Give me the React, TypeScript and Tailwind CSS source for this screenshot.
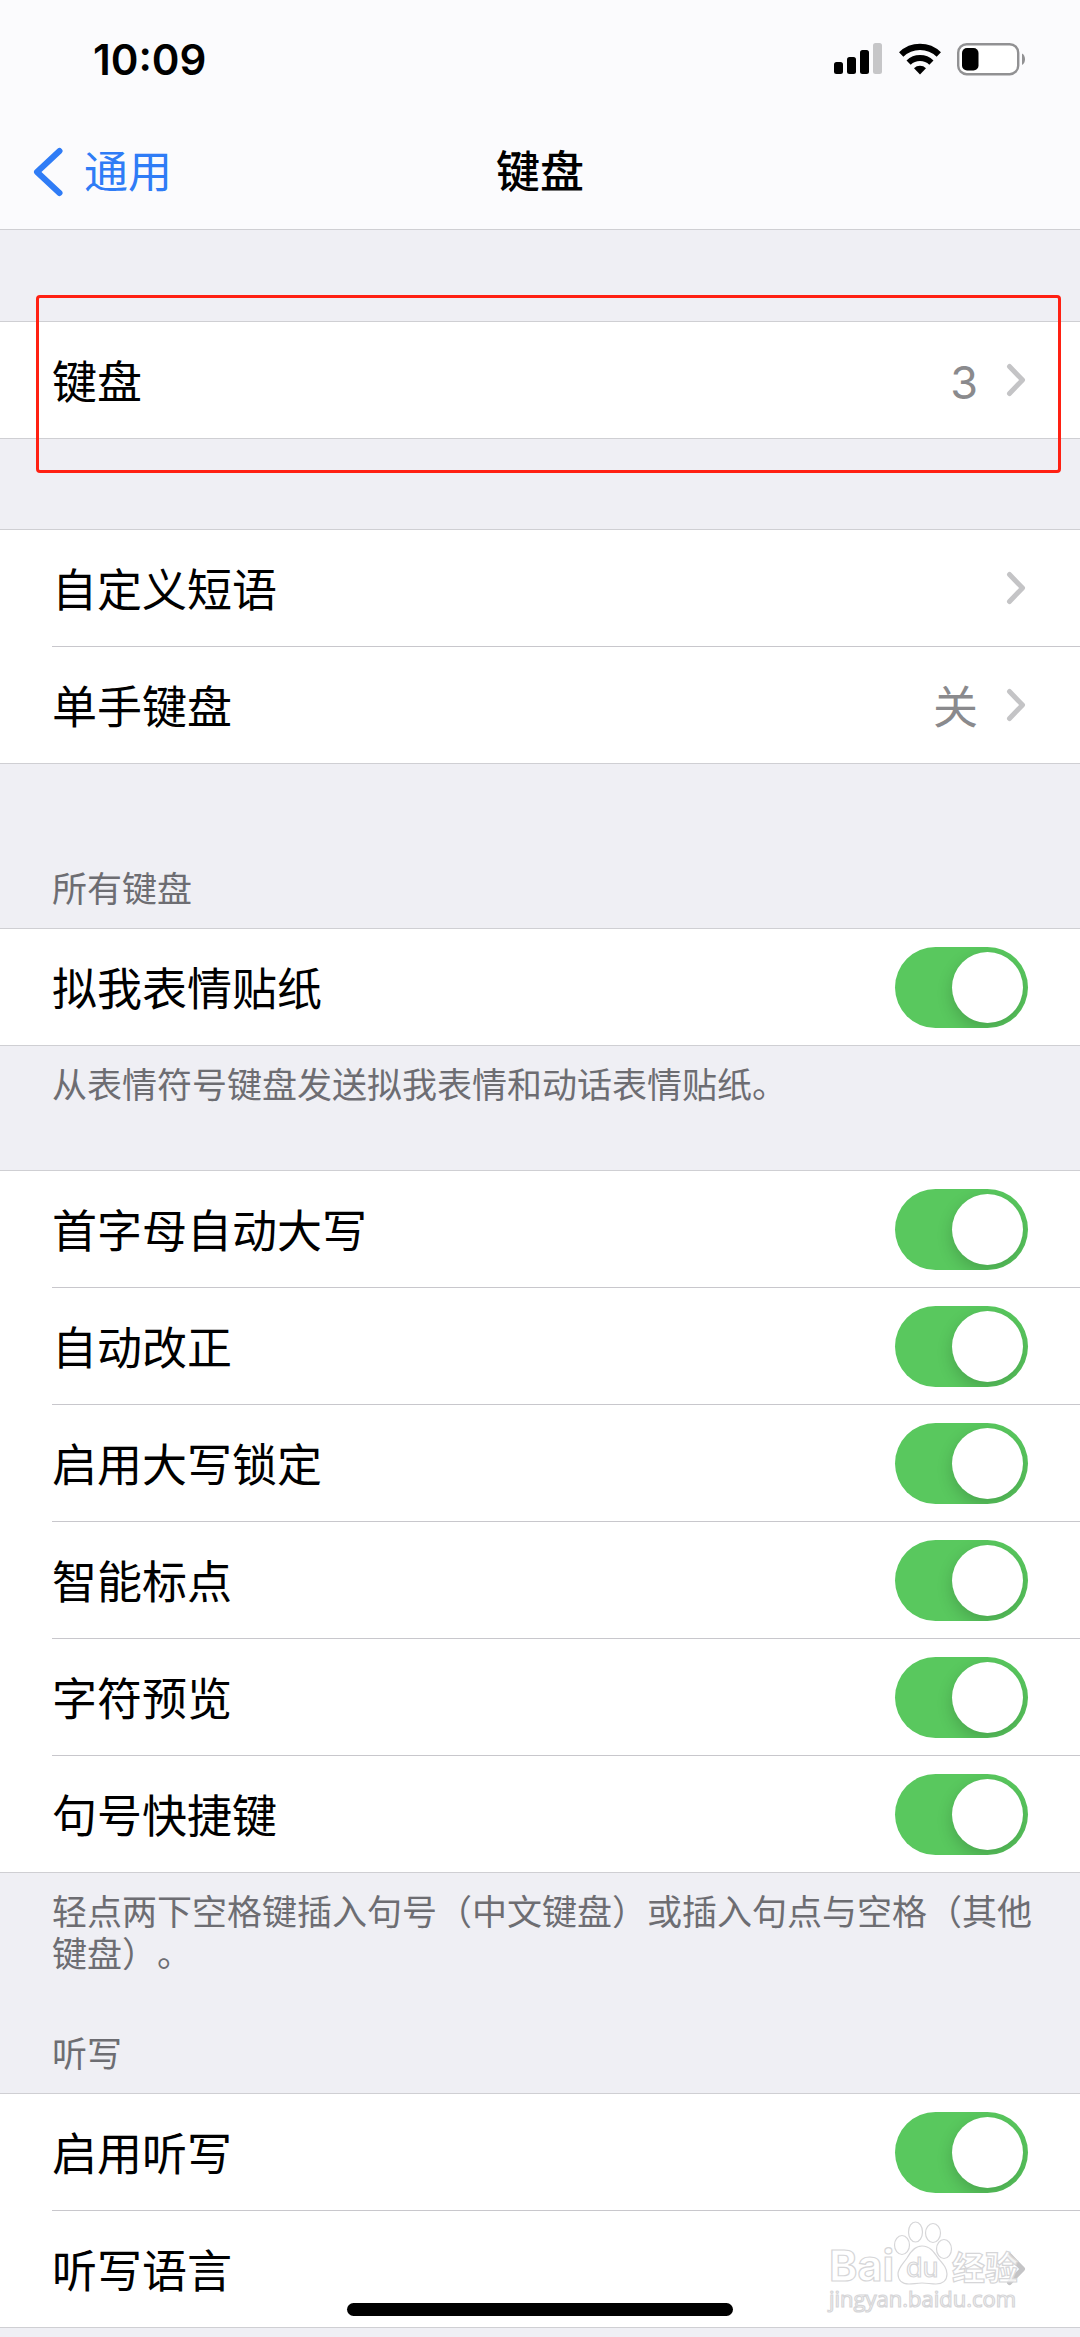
import { useState } from 'react';

type Row = {
  label: string;
  toggle?: boolean;
  value?: string;
};

type Group = {
  className: string;
  header?: string;
  footer?: string;
  highlighted?: boolean;
  rows: Row[];
};

const groups: Group[] = [
  {
    className: 'mt-[91px]',
    highlighted: true,
    rows: [{ label: '键盘', value: '3' }],
  },
  {
    className: 'mt-[90px]',
    rows: [{ label: '自定义短语' }, { label: '单手键盘', value: '关' }],
  },
  {
    className: 'mt-[104px]',
    header: '所有键盘',
    footer: '从表情符号键盘发送拟我表情和动话表情贴纸。',
    rows: [{ label: '拟我表情贴纸', toggle: true }],
  },
  {
    className: 'mt-16',
    footer: '轻点两下空格键插入句号（中文键盘）或插入句点与空格（其他键盘）。',
    rows: [
      { label: '首字母自动大写', toggle: true },
      { label: '自动改正', toggle: true },
      { label: '启用大写锁定', toggle: true },
      { label: '智能标点', toggle: true },
      { label: '字符预览', toggle: true },
      { label: '句号快捷键', toggle: true },
    ],
  },
  {
    className: 'mt-[58px]',
    header: '听写',
    rows: [{ label: '启用听写', toggle: true }, { label: '听写语言' }],
  },
];

function StatusBar() {
  return (
    <div className="flex h-[118px] items-center justify-between pl-[93px] pr-[55px]">
      <span className="font-['Inter'] text-[42px] font-semibold">10:09</span>
      <div className="flex items-center gap-4">
        <svg width="49" height="32" viewBox="0 0 49 32" aria-hidden="true">
          <rect x="0" y="19" width="9" height="12" rx="2.5" />
          <rect x="13" y="14" width="9" height="17" rx="2.5" />
          <rect x="26" y="7" width="9" height="24" rx="2.5" />
          <rect x="39" y="0" width="9" height="31" rx="2.5" fill="#c6c6c8" />
        </svg>
        <svg width="42" height="32" viewBox="0 0 42 32" fill="none" stroke="#000" aria-hidden="true">
          <path d="M2.2 11.4a27 27 0 0 1 37.6 0" strokeWidth="6.2" />
          <path d="M9.6 19.6a16.4 16.4 0 0 1 22.8 0" strokeWidth="6" />
          <path d="M21 31.4l-6-6.2a8.6 8.6 0 0 1 12 0z" fill="#000" stroke="none" />
        </svg>
        <svg width="68" height="33" viewBox="0 0 68 33" aria-hidden="true">
          <rect x="1.200" y="1.200" width="60" height="30" rx="8.500" fill="#fff" stroke="#919193" strokeWidth="2.4" />
          <rect x="5" y="5" width="16.500" height="22.500" rx="5" />
          <path d="M65 10.500c4 2 4 9.500 0 11.500z" fill="#919193" />
        </svg>
      </div>
    </div>
  );
}

function NavBar() {
  return (
    <nav className="grid h-[111px] grid-cols-3 items-center px-8 pb-1">
      <a href="#general" className="flex items-center gap-5 text-[#2f7cf6]">
        <svg width="32" height="50" viewBox="0 0 32 50" fill="none" stroke="currentColor" aria-hidden="true">
          <path d="M27.500 4L5 25l22.500 21" strokeWidth="6" strokeLinecap="round" strokeLinejoin="round" />
        </svg>
        <span className="text-[44px]">通用</span>
      </a>
      <h1 className="text-center text-[44px] font-medium">键盘</h1>
    </nav>
  );
}

function Chevron() {
  return (
    <svg width="22" height="34" viewBox="0 0 22 34" fill="none" stroke="#c4c4c6" aria-hidden="true">
      <path d="M3.500 3.500L16.500 17l-13 13.500" strokeWidth="5" strokeLinecap="round" strokeLinejoin="round" />
    </svg>
  );
}

function ToggleRow({ label }: { label: string }) {
  const [on, setOn] = useState(true);

  return (
    <label className="flex h-full items-center justify-between">
      <span className="pt-1.5">{label}</span>
      <input
        type="checkbox"
        role="switch"
        checked={on}
        onChange={() => setOn(!on)}
        className="flex h-[81px] w-[133px] appearance-none items-center overflow-hidden rounded-full bg-gray-200 px-[5px] transition-colors before:size-[71px] before:rounded-full before:bg-white before:shadow-[0_6px_16px_rgba(0,0,0,0.18)] checked:justify-end checked:bg-[#59c85e]"
      />
    </label>
  );
}

function LinkRow({ label, value }: { label: string; value?: string }) {
  return (
    <a href="#detail" className="flex h-full items-center justify-between">
      <span className="pt-1.5">{label}</span>
      <span className="flex items-center gap-7 text-[#8a8a8d]">
        <span className="pt-1.5">{value}</span>
        <Chevron />
      </span>
    </a>
  );
}

function SettingsGroup({ group }: { group: Group }) {
  return (
    <section className={`relative ${group.className}`}>
      {group.header && (
        <h2 className="px-13 pb-[18px] text-[35px] leading-[42px] text-[#6d6d72]">{group.header}</h2>
      )}
      <ul className="border-y border-[#cfcfd3] bg-white">
        {group.rows.map((row) => (
          <li key={row.label} className="group pl-13">
            <div className="h-[117px] border-b border-[#c8c7cc] pr-13 text-[45px] group-last:h-[116px] group-last:border-b-0">
              {row.toggle ? <ToggleRow label={row.label} /> : <LinkRow label={row.label} value={row.value} />}
            </div>
          </li>
        ))}
      </ul>
      {group.footer && (
        <p className="pl-13 pr-12 pt-[18px] text-[35px] leading-[42px] text-[#6d6d72] [text-spacing-trim:space-all]">
          {group.footer}
        </p>
      )}
      {group.highlighted && (
        <div className="pointer-events-none absolute -top-[26px] -bottom-[34px] left-9 right-[19px] rounded-sm border-3 border-[#ff2012]" />
      )}
    </section>
  );
}

function Watermark() {
  return (
    <svg
      width="200"
      height="100"
      viewBox="0 0 200 100"
      className="pointer-events-none absolute bottom-[21px] right-[54px]"
      fill="#fff"
      fillOpacity="0.8"
      stroke="#d6d6d8"
      strokeWidth="1.2"
    >
      <text x="3" y="65" fontSize="43" fontWeight="700" fontFamily="Inter, sans-serif">Bai</text>
      <ellipse cx="76" cy="29" rx="7.500" ry="9.500" />
      <ellipse cx="89.500" cy="16" rx="7" ry="10" />
      <ellipse cx="107" cy="17" rx="7.500" ry="9.500" />
      <ellipse cx="118" cy="33" rx="7.500" ry="9.500" />
      <path d="M96 30c8 0 12 6 16 12 5 6 9 10 9 16 0 7-5 10-11 10-5 0-9-1-14-1s-9 1-13 1c-7 0-11-4-11-10s5-10 9-16c4-7 8-12 15-12z" />
      <text x="80" y="61" fontSize="27" fontFamily="Inter, sans-serif">du</text>
      <text x="126" y="64" fontSize="33" fontWeight="700" fontFamily="'Noto Sans CJK SC', sans-serif">经验</text>
      <text x="3" y="91" fontSize="22" fontFamily="'Open Sans', sans-serif">jingyan.baidu.com</text>
    </svg>
  );
}

export default function App() {
  return (
    <div className="relative min-h-screen bg-[#efeff4] pb-2 font-['Inter','Noto_Sans_CJK_SC',sans-serif] text-black">
      <header className="border-b border-[#cfcfd3] bg-[#fbfbfd]">
        <StatusBar />
        <NavBar />
      </header>

      <main>
        {groups.map((group) => (
          <SettingsGroup key={group.rows[0].label} group={group} />
        ))}
      </main>

      <Watermark />

      {/* Home indicator */}
      <div className="absolute inset-x-0 bottom-[21px] flex justify-center">
        <div className="h-[13px] w-[386px] rounded-full bg-black" />
      </div>
    </div>
  );
}
